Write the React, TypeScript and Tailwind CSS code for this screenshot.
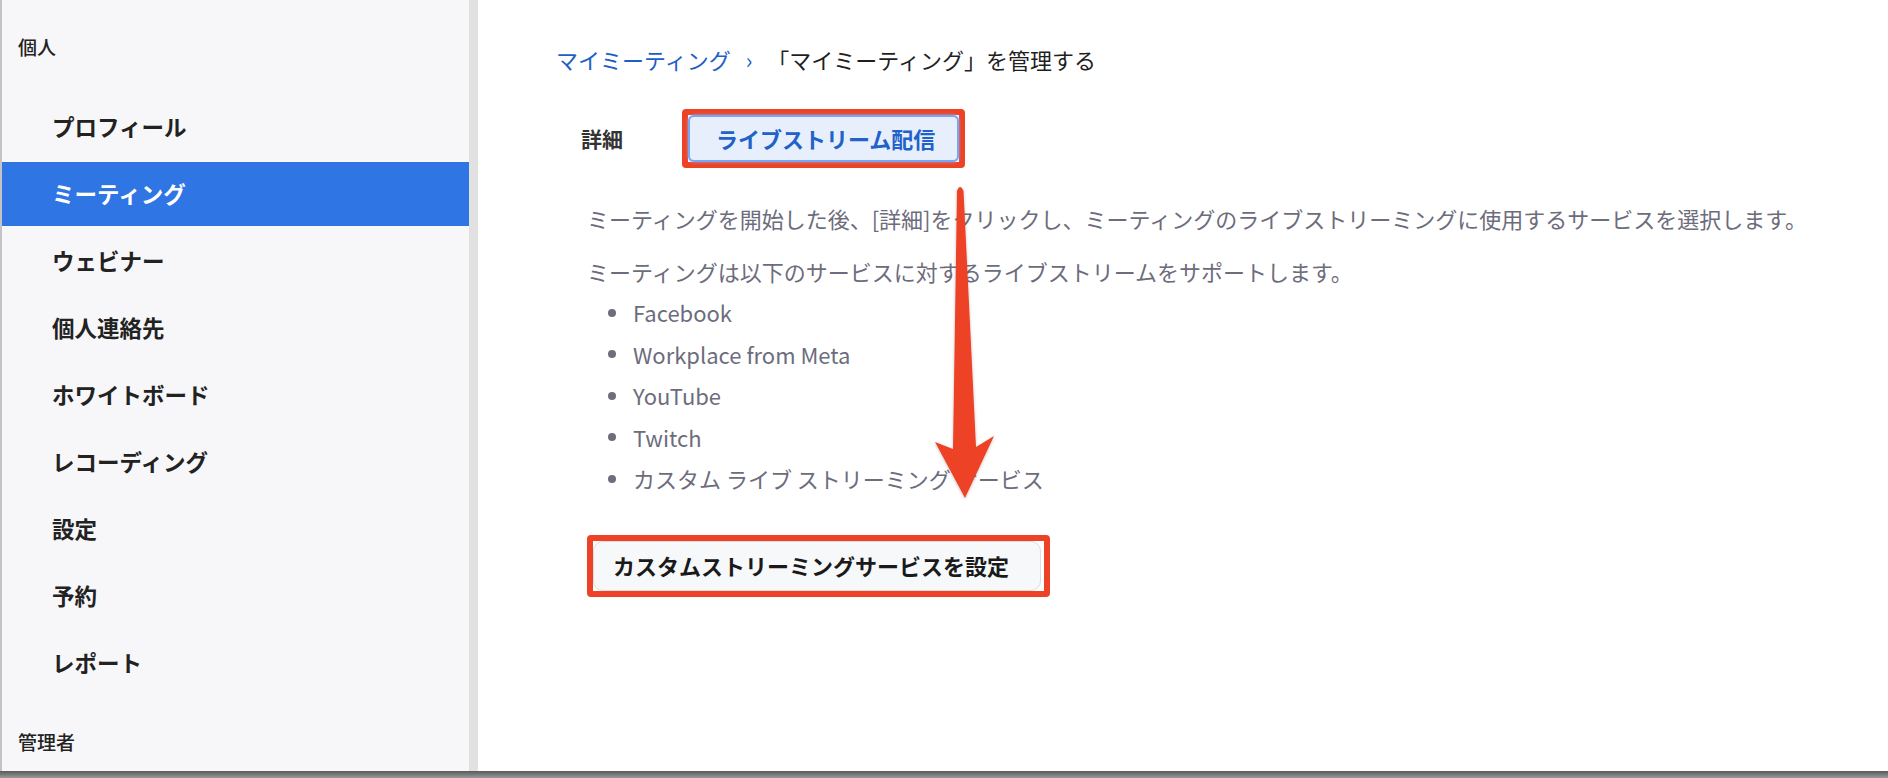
import { ReactNode } from "react";

const sideItems = ["プロフィール", "ミーティング", "ウェビナー", "個人連絡先", "ホワイトボード", "レコーディング", "設定", "予約", "レポート"];
const services = ["Facebook", "Workplace from Meta", "YouTube", "Twitch", "カスタム ライブ ストリーミング サービス"];

function RedBox({ children, className = "" }: { children: ReactNode; className?: string }) {
  return <div className={`rounded-[4px] border-[6px] border-[#ee4227] ${className}`}>{children}</div>;
}

function Sidebar() {
  return (
    <aside className="flex h-full w-[469px] shrink-0 flex-col overflow-hidden border-l-2 border-[#c4c4c6] bg-[#f7f7f9]">
      <div className="flex h-[95px] shrink-0 items-center pl-[16px] text-[19px] font-medium text-[#222]">個人</div>
      <nav className="flex shrink-0 flex-col gap-[3px]">
        {sideItems.map((item) => {
          const active = item === "ミーティング";
          return (
            <div
              key={item}
              className={
                active
                  ? "flex h-16 items-center bg-[#2f75e3] pl-[50px] text-[22.5px] font-semibold text-white"
                  : "flex h-16 items-center pl-[50px] text-[22.5px] font-semibold text-[#222]"
              }
            >
              {item}
            </div>
          );
        })}
      </nav>
      <div className="flex h-[94px] shrink-0 items-center pl-[16px] text-[19px] font-medium text-[#222]">管理者</div>
    </aside>
  );
}

function Content() {
  return (
    <main className="flex-1 bg-white">
      <div className="mt-[43px] flex h-[32px] items-center pl-[78px] text-[22px] text-[#1f1f1f]">
        <span className="text-[#1d5fc4]">マイミーティング</span>
        <span className="mx-[15px] text-[#1d5fc4]">›</span>
        <span>「マイミーティング」を管理する</span>
      </div>

      <div className="mt-[34px] flex items-center pl-[103px]">
        <span className="text-[21px] font-semibold text-[#333]">詳細</span>
        <RedBox className="ml-[59px]">
          <button className="flex h-[47px] items-center rounded-[6px] border-2 border-[#78a6f3] bg-[#e7effc] pl-[26px] pr-[22px] text-[22px] font-semibold text-[#2161c8] shadow-[0_0_3px_#8ab4f8]">
            ライブストリーム配信
          </button>
        </RedBox>
      </div>

      <div className="pl-[109px] text-[22px] text-[#6c6c7c]">
        <p className="mt-[34px] leading-[32px]">
          ミーティングを開始した後、[詳細]をクリックし、ミーティングのライブストリーミングに使用するサービスを選択します。
        </p>
        <p className="mt-[21px] leading-[32px]">ミーティングは以下のサービスに対するライブストリームをサポートします。</p>
        <ul className="mt-[5px]">
          {services.map((s) => (
            <li key={s} className="flex h-[41.5px] items-center">
              <span className="ml-[21px] h-[8px] w-[8px] rounded-full bg-[#6d6d7d]" />
              <span className="ml-[17px]">{s}</span>
            </li>
          ))}
        </ul>

        <RedBox className="mt-[35px] inline-flex pr-[3px]">
          <button className="flex h-[50px] items-center rounded-[10px] border border-[#dcdde0] bg-[#f7f8fa] pl-[19px] pr-[31px] text-[22px] font-semibold text-[#1a1a1a]">
            カスタムストリーミングサービスを設定
          </button>
        </RedBox>
      </div>
    </main>
  );
}

export default function App() {
  return (
    <div className="relative flex h-[778px] w-[1888px] flex-col overflow-hidden font-['Noto_Sans_CJK_JP',sans-serif]">
      <div className="flex h-[771px] shrink-0">
        <Sidebar />
        <div className="w-[9px] shrink-0 bg-[#e1e1e1]" />
        <Content />
      </div>
      <div className="h-[7px] shrink-0 bg-gradient-to-b from-[#5a5a5a] to-[#9a9a9a]" />

      <svg className="pointer-events-none absolute left-0 top-0" width="1888" height="778" viewBox="0 0 1888 778">
        <defs>
          <filter id="sh" x="-20%" y="-5%" width="140%" height="110%">
            <feDropShadow dx="0" dy="1" stdDeviation="1.5" floodColor="#000" floodOpacity="0.25" />
          </filter>
        </defs>
        <path
          d="M957 191 Q960 183 963.5 191 L976 447 L994 436 L965 498 L935 442 L953 449 Z"
          fill="#ee4227"
          filter="url(#sh)"
        />
      </svg>
    </div>
  );
}
